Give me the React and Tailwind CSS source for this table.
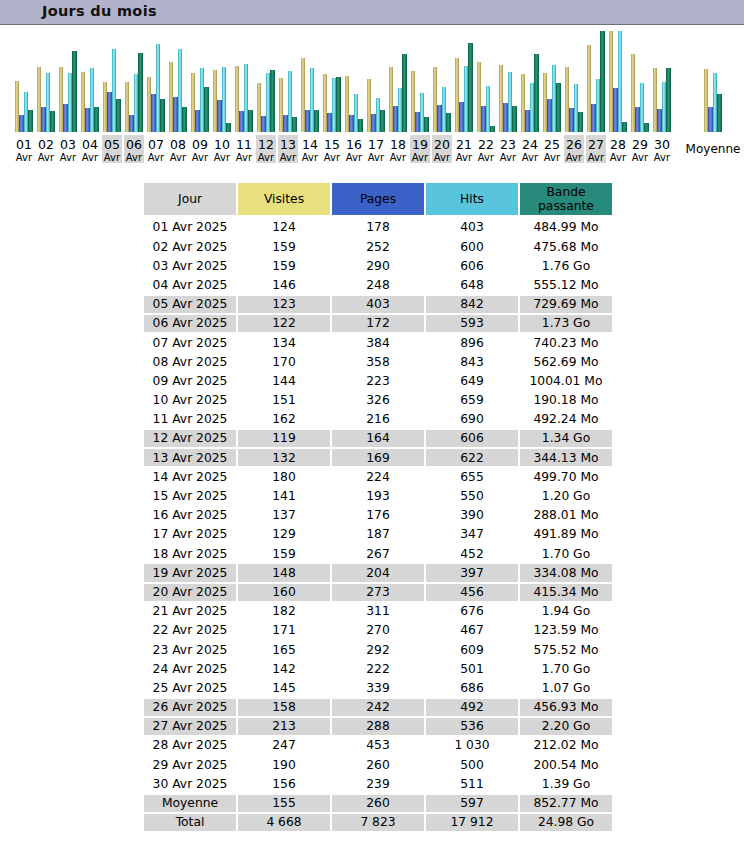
const days = [
  // jour, visites, pages, hits, bande passante (texte), bande en Mo
  ["01", 124, 178, 403, "484.99 Mo", 484.99],
  ["02", 159, 252, 600, "475.68 Mo", 475.68],
  ["03", 159, 290, 606, "1.76 Go", 1802.24],
  ["04", 146, 248, 648, "555.12 Mo", 555.12],
  ["05", 123, 403, 842, "729.69 Mo", 729.69],
  ["06", 122, 172, 593, "1.73 Go", 1771.52],
  ["07", 134, 384, 896, "740.23 Mo", 740.23],
  ["08", 170, 358, 843, "562.69 Mo", 562.69],
  ["09", 144, 223, 649, "1004.01 Mo", 1004.01],
  ["10", 151, 326, 659, "190.18 Mo", 190.18],
  ["11", 162, 216, 690, "492.24 Mo", 492.24],
  ["12", 119, 164, 606, "1.34 Go", 1372.16],
  ["13", 132, 169, 622, "344.13 Mo", 344.13],
  ["14", 180, 224, 655, "499.70 Mo", 499.7],
  ["15", 141, 193, 550, "1.20 Go", 1228.8],
  ["16", 137, 176, 390, "288.01 Mo", 288.01],
  ["17", 129, 187, 347, "491.89 Mo", 491.89],
  ["18", 159, 267, 452, "1.70 Go", 1740.8],
  ["19", 148, 204, 397, "334.08 Mo", 334.08],
  ["20", 160, 273, 456, "415.34 Mo", 415.34],
  ["21", 182, 311, 676, "1.94 Go", 1986.56],
  ["22", 171, 270, 467, "123.59 Mo", 123.59],
  ["23", 165, 292, 609, "575.52 Mo", 575.52],
  ["24", 142, 222, 501, "1.70 Go", 1740.8],
  ["25", 145, 339, 686, "1.07 Go", 1095.68],
  ["26", 158, 242, 492, "456.93 Mo", 456.93],
  ["27", 213, 288, 536, "2.20 Go", 2252.8],
  ["28", 247, 453, 1030, "212.02 Mo", 212.02],
  ["29", 190, 260, 500, "200.54 Mo", 200.54],
  ["30", 156, 239, 511, "1.39 Go", 1423.36],
]

const weekend = ["05", "06", "12", "13", "19", "20", "26", "27"]

const MAXH = 101
const maxV = 247
const maxH = 1030
const maxK = 2252.8

const fmt = (n) => n.toLocaleString("fr-FR").replace(/\u202f|\u00a0/g, " ")

function Bars({ v, p, h, k }) {
  const hv = Math.round((v / maxV) * MAXH)
  const hp = Math.round((p / maxH) * MAXH)
  const hh = Math.round((h / maxH) * MAXH)
  const hk = Math.round((k / maxK) * MAXH)
  return (
    <div className="flex items-end h-[101px]">
      <div className="w-[4px] bg-[linear-gradient(90deg,#b09c4c,#e6dc9c_45%,#a8944a)]" style={{ height: hv }} />
      <div className="w-[5px] bg-[linear-gradient(90deg,#2a48a8,#6f8de6_45%,#2c4aa8)]" style={{ height: hp }} />
      <div className="w-[4px] bg-[linear-gradient(90deg,#24a8b8,#a6f2f8_45%,#22a0b4)]" style={{ height: hh }} />
      <div className="w-[5px] bg-[linear-gradient(90deg,#0a5c40,#2a9a74_45%,#0a5a40)]" style={{ height: hk }} />
    </div>
  )
}

export default function App() {
  const cell = "flex items-center justify-center h-[17.2px]"
  const head = "h-[32px] mb-[2px] flex items-center justify-center"
  return (
    <div className="min-h-[842px] bg-white text-black font-['DejaVu_Sans','Liberation_Sans',sans-serif]">
      {/* Titre */}
      <div className="h-[25px] bg-[#b3b2cb] border-b border-[#6e6e78] pl-[42px] flex items-center">
        <h1 className="text-[14.5px] font-bold tracking-[0.3px] text-[#111]">Jours du mois</h1>
      </div>

      {/* Graphique */}
      <div className="flex pl-[13px] pt-[6px]">
        {days.map(([d, v, p, h, , k]) => (
          <div key={d} className="w-[22px] flex flex-col items-center">
            <Bars v={v} p={p} h={h} k={k} />
            <div
              className={`mt-[3px] w-[20px] h-[28px] flex flex-col items-center pt-[2px] ${
                weekend.includes(d) ? "bg-[#d6d6d6]" : ""
              }`}
            >
              <span className="text-[12.5px] leading-[15px]">{d}</span>
              <span className="text-[10px] leading-[11px]">Avr</span>
            </div>
          </div>
        ))}
        <div className="ml-[12px] w-[56px] flex flex-col items-center">
          <Bars v={155} p={260} h={597} k={852.77} />
          <div className="mt-[3px] h-[28px] flex items-center text-[12px]">Moyenne</div>
        </div>
      </div>

      {/* Tableau */}
      <div className="ml-[144px] mt-[20px] w-[468px] grid grid-cols-5 gap-x-[2px] gap-y-[2px] text-[12.3px]">
        <div className={`${head} bg-[#d6d6d6]`}>Jour</div>
        <div className={`${head} bg-[#e8e07e]`}>Visites</div>
        <div className={`${head} bg-[#3b62c6]`}>Pages</div>
        <div className={`${head} bg-[#58c5dc]`}>Hits</div>
        <div className={`${head} flex-col leading-[14px] bg-[#278a7b]`}>
          <span>Bande</span>
          <span>passante</span>
        </div>

        {days.map(([d, v, p, h, bw]) => {
          const bg = weekend.includes(d) ? "bg-[#d6d6d6]" : ""
          return [
            <div key={d + "j"} className={`${cell} ${bg}`}>{d} Avr 2025</div>,
            <div key={d + "v"} className={`${cell} ${bg}`}>{fmt(v)}</div>,
            <div key={d + "p"} className={`${cell} ${bg}`}>{fmt(p)}</div>,
            <div key={d + "h"} className={`${cell} ${bg}`}>{fmt(h)}</div>,
            <div key={d + "k"} className={`${cell} ${bg}`}>{bw}</div>,
          ]
        })}

        {[
          ["Moyenne", "155", "260", "597", "852.77 Mo"],
          ["Total", "4 668", "7 823", "17 912", "24.98 Go"],
        ].map((row) =>
          row.map((t, i) => (
            <div key={row[0] + i} className={`${cell} bg-[#d6d6d6]`}>
              {t}
            </div>
          ))
        )}
      </div>
    </div>
  )
}
